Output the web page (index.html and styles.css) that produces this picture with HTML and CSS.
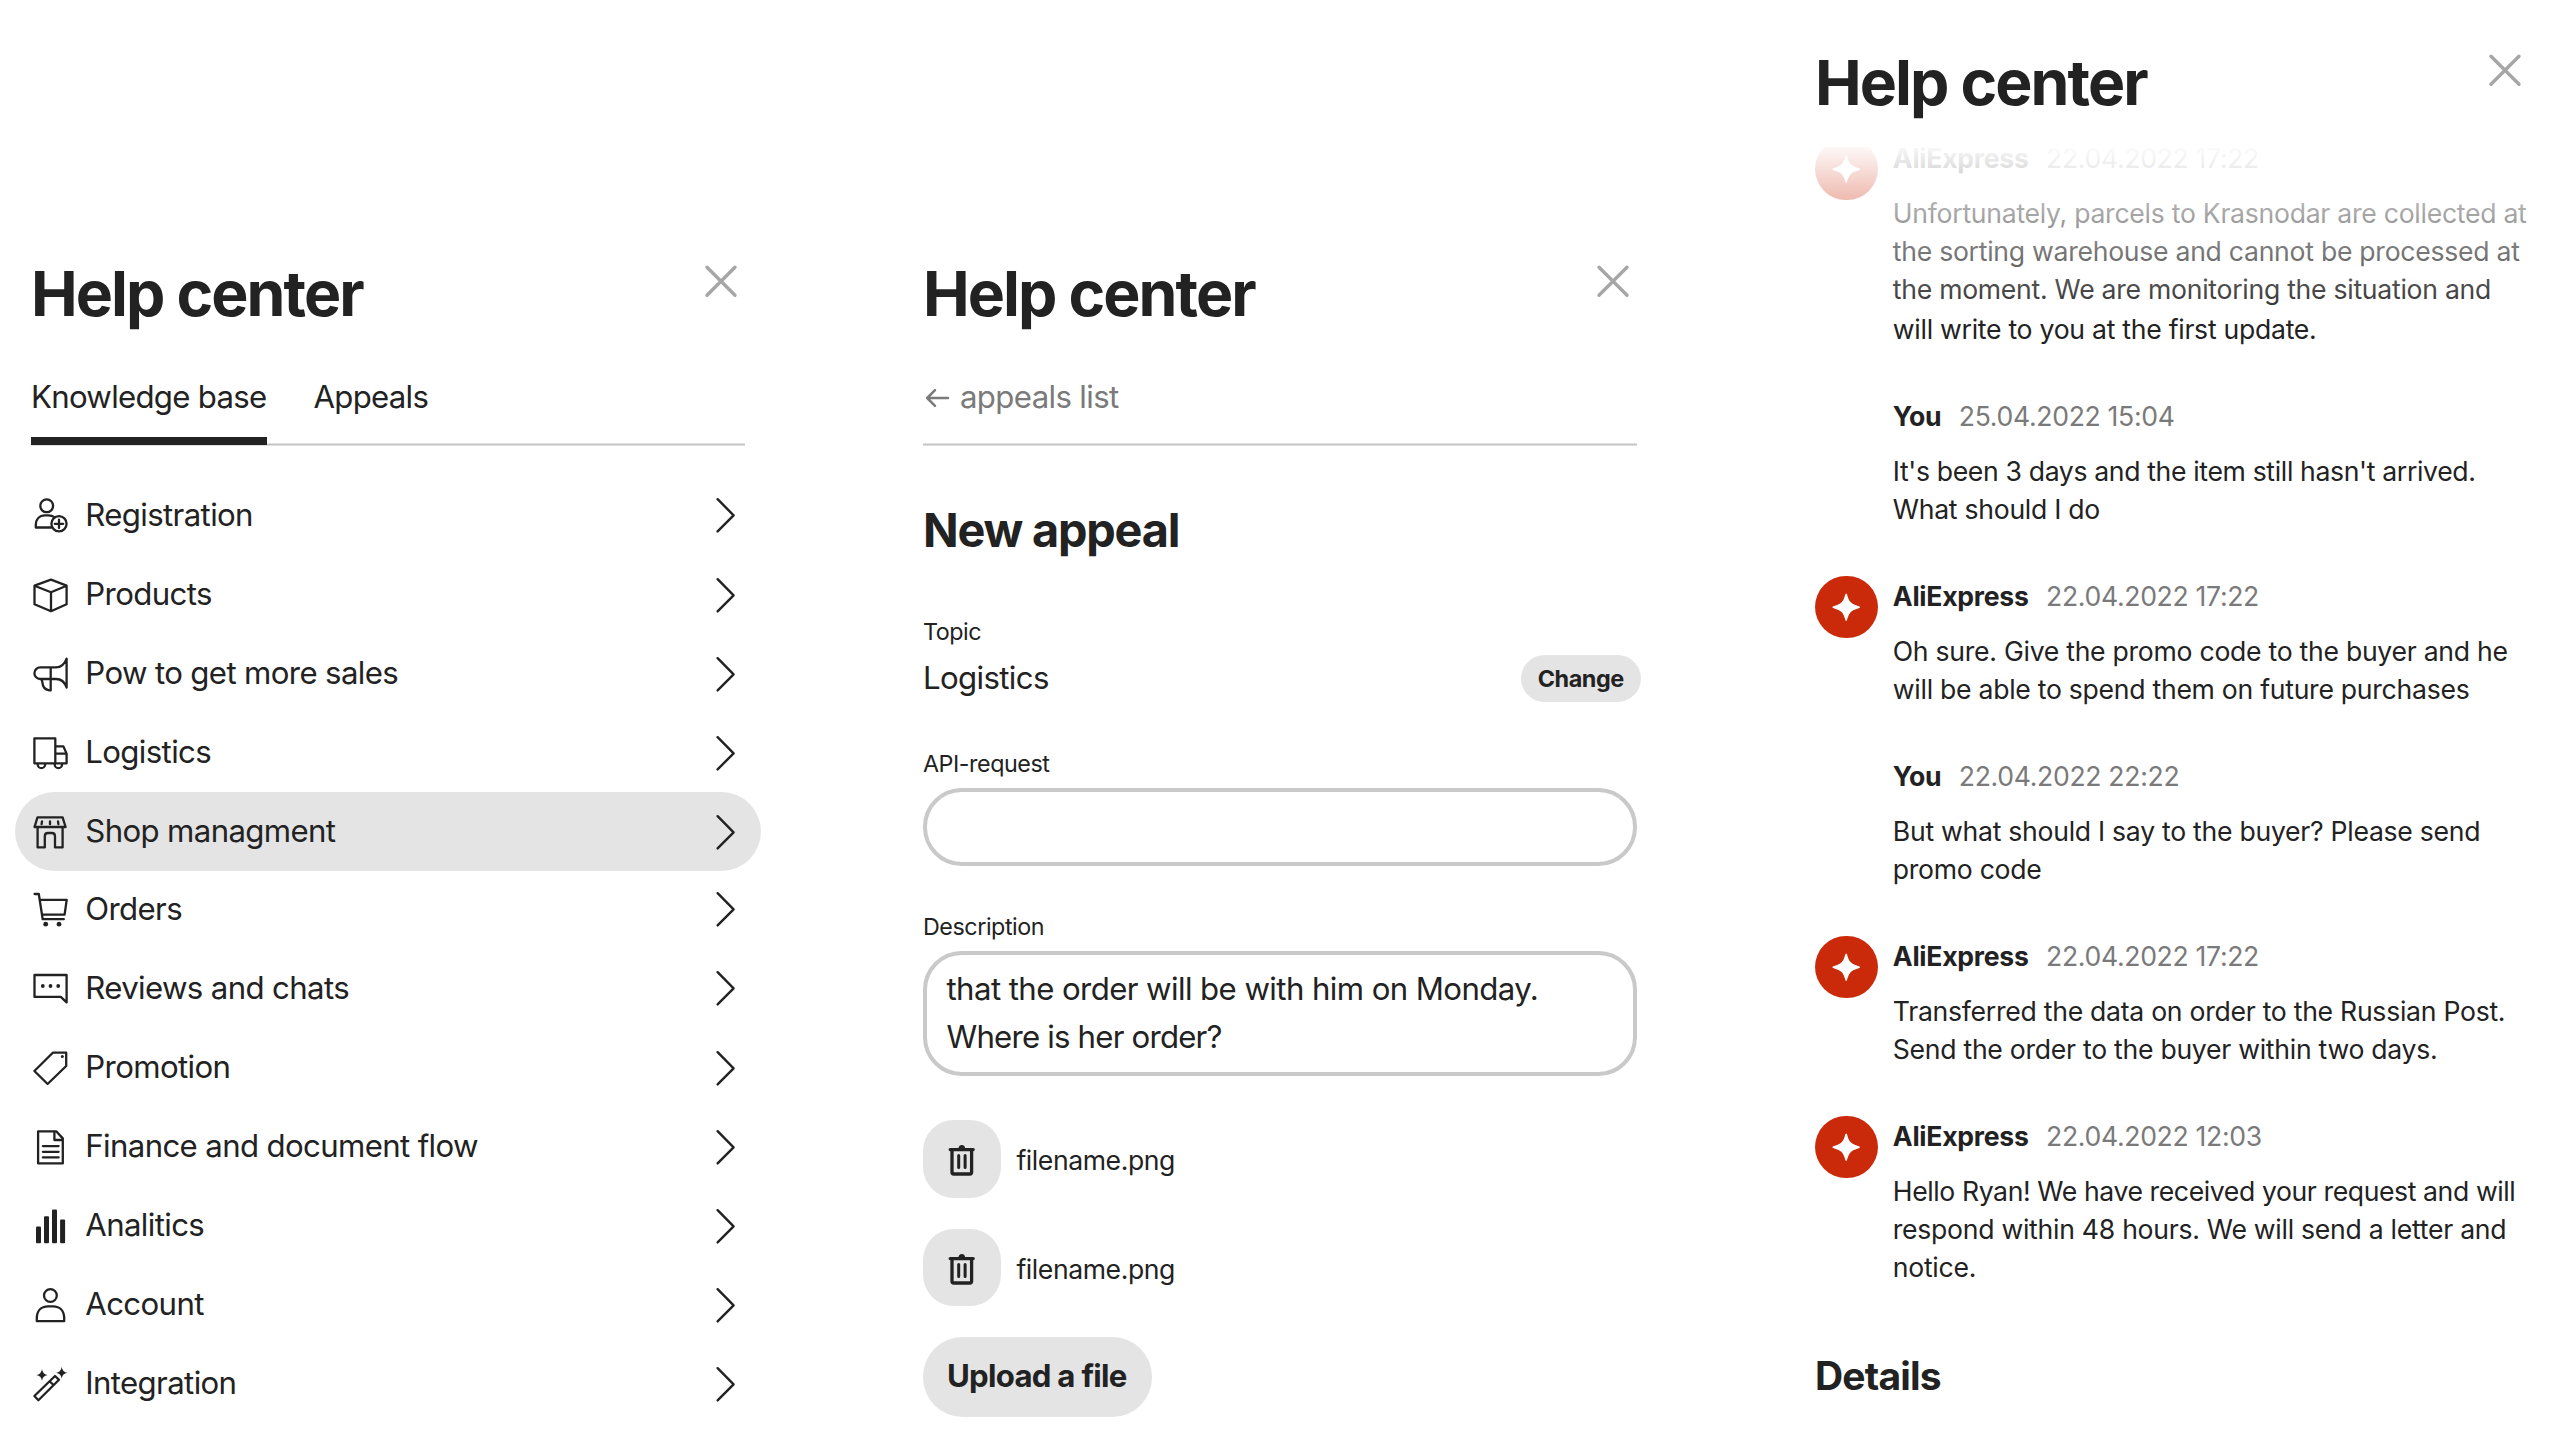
FILE: index.html
```html
<!DOCTYPE html>
<html lang="en">
<head>
<meta charset="utf-8">
<title>Help center</title>
<link rel="stylesheet" href="styles.css">
</head>
<body>
<svg class="sprite" aria-hidden="true">
  <symbol id="close" viewBox="0 0 40 40"><path d="M6 6.2 34 34.2M34 6.2 6 34.2" stroke-width="3.4"/></symbol>
  <symbol id="chevron" viewBox="0 0 40 40"><path d="M12.6 4.2 28.6 20.3 12.6 36.4" stroke-width="2.4"/></symbol>
  <symbol id="trash" viewBox="0 0 40 40">
    <path d="M8.2 10.6H31.2M10 10.6V33.2Q10 35 11.8 35H27.8Q29.6 35 29.6 33.2V10.6" stroke-width="3.3"/>
    <path d="M16.7 16.6V28.4M23.1 16.6V28.4" stroke-width="3"/>
    <path class="solid" d="M16.4 10C16.4 7.6 17.8 6 19.8 6S23.2 7.6 23.2 10Z"/>
  </symbol>
  <symbol id="spark" viewBox="-31.2 -31.2 62.4 62.4">
    <path class="solid" d="M0-13.8C1.3-13.8 1.2-8.6 4.6-4.9C8.2-1.4 13.8-1.4 13.8 0C13.8 1.4 8.2 1.4 4.6 4.9C1.2 8.6 1.3 13.8 0 13.8C-1.3 13.8-1.2 8.6-4.6 4.9C-8.2 1.4-13.8 1.4-13.8 0C-13.8-1.4-8.2-1.4-4.6-4.9C-1.2-8.6-1.3-13.8 0-13.8Z"/>
  </symbol>
</svg>
<main class="page">

  <section class="panel">
    <header class="head"><h1>Help center</h1><svg class="ico close"><use href="#close"/></svg></header>
    <nav class="tabs"><a class="tab active">Knowledge base</a><a class="tab">Appeals</a></nav>
    <ul class="menu">
      <li class="item"><svg class="ico" viewBox="0 0 40 40"><circle cx="15.7" cy="10.8" r="6.4"/><path d="M20.5 32.5H4.8V30.5C4.8 24.2 8.6 20.4 14 20.4H17.4C19.8 20.4 21.8 21 23.4 22.2"/><circle cx="28" cy="28.8" r="7.6"/><path d="M28 24.6V33M23.8 28.8H32.2"/></svg><span class="label">Registration</span><svg class="ico"><use href="#chevron"/></svg></li>
      <li class="item"><svg class="ico" viewBox="0 0 40 40"><path d="M20 4.6 35.6 10.6V29.2L20 36.2 3.5 29.2V10.6ZM3.5 10.8 20 17.2 35.6 10.8M20 17.2V36"/></svg><span class="label">Products</span><svg class="ico"><use href="#chevron"/></svg></li>
      <li class="item"><svg class="ico" viewBox="0 0 40 40"><path d="M35.6 4.6C33.4 10.6 30 13.4 25 13.4H9.2A5.8 5.8 0 0 0 9.2 25H25C30 25 33.6 27.8 35.6 33.6ZM19.7 13.4V36.4H18.2C14 35.6 11.6 32.6 11.4 28.4C11.3 26.6 10.8 25.6 9.8 25"/></svg><span class="label">Pow to get more sales</span><svg class="ico"><use href="#chevron"/></svg></li>
      <li class="item"><svg class="ico" viewBox="0 0 40 40"><path d="M3.4 5.4H24.3V30.3H3.4ZM24.3 13.4H32.4L35.6 20.6V30.3H24.3M24.3 20.6H35.6M6.7 30.3V31.4A3.7 3.7 0 0 0 14.1 31.4V30.3M23.7 30.3V31.4A3.7 3.7 0 0 0 31.1 31.4V30.3"/></svg><span class="label">Logistics</span><svg class="ico"><use href="#chevron"/></svg></li>
      <li class="item selected"><svg class="ico" viewBox="0 0 40 40"><path d="M6.5 5.3H31.6L34.6 15H3.5ZM6.6 15V35.4H13.8V24.2Q13.8 21 17 21H20.8Q24 21 24 24.2V35.4H31.6V15M11 9.4 10.6 12.2M19 9.4V12.2M27 9.4 27.4 12.2"/></svg><span class="label">Shop managment</span><svg class="ico"><use href="#chevron"/></svg></li>
      <li class="item"><svg class="ico" viewBox="0 0 40 40"><path d="M3.6 5H7.8L11.7 30.2H32.8M8.8 10.8H35.7L33.6 25.7H11"/><circle class="solid" cx="14.7" cy="35.2" r="2.4"/><circle class="solid" cx="28" cy="35.2" r="2.4"/></svg><span class="label">Orders</span><svg class="ico"><use href="#chevron"/></svg></li>
      <li class="item"><svg class="ico" viewBox="0 0 40 40"><path d="M3.5 7H35.6V34.4L29.8 28.9H3.5Z"/><circle class="solid" cx="11.8" cy="18" r="1.9"/><circle class="solid" cx="19.5" cy="18" r="1.9"/><circle class="solid" cx="27.2" cy="18" r="1.9"/></svg><span class="label">Reviews and chats</span><svg class="ico"><use href="#chevron"/></svg></li>
      <li class="item"><svg class="ico" viewBox="0 0 40 40"><path d="M21.8 4.7H35.2V18L16.6 36 3.4 23Z"/><circle class="solid" cx="31.3" cy="8.5" r="1.5"/></svg><span class="label">Promotion</span><svg class="ico"><use href="#chevron"/></svg></li>
      <li class="item"><svg class="ico" viewBox="0 0 40 40"><path d="M7.1 4.3H25.2L31.8 11.4V36.4H7.1ZM23.4 4.6V13H31.6M11.9 19.1H27.6M11.9 24.8H27.6M11.9 30.4H27.6"/></svg><span class="label">Finance and document flow</span><svg class="ico"><use href="#chevron"/></svg></li>
      <li class="item"><svg class="ico" viewBox="0 0 40 40"><rect class="solid" x="5" y="20.6" width="5" height="16.6" rx="1"/><rect class="solid" x="13" y="10.3" width="5" height="26.9" rx="1"/><rect class="solid" x="21" y="3.6" width="5" height="33.6" rx="1"/><rect class="solid" x="29.1" y="13.6" width="5" height="23.6" rx="1"/></svg><span class="label">Analitics</span><svg class="ico"><use href="#chevron"/></svg></li>
      <li class="item"><svg class="ico" viewBox="0 0 40 40"><circle cx="19.4" cy="10.5" r="6.4"/><path d="M5.8 36.2V33.6C5.8 26 10 21.3 17 21.3H22C29 21.3 33.2 26 33.2 33.6V36.2Z"/></svg><span class="label">Account</span><svg class="ico"><use href="#chevron"/></svg></li>
      <li class="item"><svg class="ico" viewBox="0 0 40 40"><path d="M3.4 32 24 12 28 15.8 7.4 36.2ZM18.6 17.2 22.5 21"/><path class="solid" d="M11 5.2Q11.8 10.2 16.6 11Q11.8 11.8 11 16.8Q10.2 11.8 5.4 11Q10.2 10.2 11 5.2ZM30.7 2.9Q31.5 7.9 36.3 8.7Q31.5 9.5 30.7 14.5Q29.9 9.5 25.1 8.7Q29.9 7.9 30.7 2.9Z"/></svg><span class="label">Integration</span><svg class="ico"><use href="#chevron"/></svg></li>
    </ul>
  </section>

  <section class="panel">
    <header class="head"><h1>Help center</h1><svg class="ico close"><use href="#close"/></svg></header>
    <a class="back"><svg class="arrow" viewBox="0 0 37 40"><path d="M4.4 20H25M12 12.2 4.2 20 12 27.8"/></svg>appeals list</a>
    <h2>New appeal</h2>
    <div class="caption">Topic</div>
    <div class="topic"><span>Logistics</span><button class="change">Change</button></div>
    <label class="caption api">API-request</label>
    <div class="field"></div>
    <label class="caption desc">Description</label>
    <div class="field area">that the order will be with him on Monday.<br><span class="snug">Where is her order?</span></div>
    <div class="files">
      <div class="file"><button class="remove"><svg class="ico"><use href="#trash"/></svg></button><span>filename.png</span></div>
      <div class="file"><button class="remove"><svg class="ico"><use href="#trash"/></svg></button><span>filename.png</span></div>
      <button class="upload">Upload a file</button>
    </div>
  </section>

  <section class="panel chat">
    <header class="head"><h1>Help center</h1><svg class="ico close"><use href="#close"/></svg></header>
    <div class="thread">
      <article class="msg"><svg class="avatar"><use href="#spark"/></svg><div class="who"><b>AliExpress</b><time>22.04.2022 17:22</time></div><div class="text">Unfortunately, parcels to Krasnodar are collected at<br>the sorting warehouse and cannot be processed at<br>the moment. We are monitoring the situation and<p>will write to you at the first update.</p></div></article>
      <article class="msg"><div class="who"><b>You</b><time>25.04.2022 15:04</time></div><div class="text"><span class="tight">It's been 3 days and the item still hasn't arrived.</span><br>What should I do</div></article>
      <article class="msg"><svg class="avatar"><use href="#spark"/></svg><div class="who"><b>AliExpress</b><time>22.04.2022 17:22</time></div><div class="text">Oh sure. Give the promo code to the buyer and he<br>will be able to spend them on future purchases</div></article>
      <article class="msg"><div class="who"><b>You</b><time>22.04.2022 22:22</time></div><div class="text">But what should I say to the buyer? Please send<br>promo code</div></article>
      <article class="msg"><svg class="avatar"><use href="#spark"/></svg><div class="who"><b>AliExpress</b><time>22.04.2022 17:22</time></div><div class="text">Transferred the data on order to the Russian Post.<br>Send the order to the buyer within two days.</div></article>
      <article class="msg last"><svg class="avatar"><use href="#spark"/></svg><div class="who"><b>AliExpress</b><time>22.04.2022 12:03</time></div><div class="text"><span class="tighter">Hello Ryan! We have received your request and will</span><br>respond within 48 hours. We will send a letter and<br>notice.</div></article>
      <h3>Details</h3>
    </div>
  </section>

</main>
</body>
</html>
```
FILE: styles.css
```css
* { box-sizing: border-box; }

body, h1, h2, h3, ul, p { margin: 0; padding: 0; }

body {
  height: 1440px;
  overflow: hidden;
  background: #fff;
  color: #222;
  font: 400 31.2px/38px Inter, "Liberation Sans", sans-serif;
  letter-spacing: -0.64px;
  white-space: nowrap;
}

.sprite { display: none; }

.page {
  display: grid;
  grid-template-columns: repeat(3, 714px);
  column-gap: 178px;
  height: 1440px;
  padding-left: 31px;
}

.panel {
  display: flex;
  flex-direction: column;
  padding-top: 255px;
  min-width: 0;
}

.panel.chat { padding-top: 44px; }

.head {
  display: flex;
  justify-content: space-between;
  height: 76px;
}

h1 {
  font-size: 62.5px;
  line-height: 76px;
  font-weight: 700;
  letter-spacing: -1.93px;
}

.ico {
  flex: none;
  width: 40px;
  height: 40px;
  fill: none;
  stroke: currentColor;
  stroke-width: 2.3;
  stroke-linecap: round;
  stroke-linejoin: round;
}

.solid { fill: currentColor; stroke: none; }

.close { margin: 5.5px 3.6px 0 0; color: #a6a6a6; }

/* Tabs */
.tabs {
  display: flex;
  gap: 46.5px;
  height: 70px;
  margin-top: 45px;
  background: linear-gradient(#e2e2e2 1px, #c6c6c6 1px 2px, #dedede 2px) bottom / 100% 3px no-repeat;
}

.tab { line-height: 42px; letter-spacing: -0.72px; }

.tab.active {
  height: 69px;
  width: 236px;
  border-bottom: 8px solid #222;
}

/* Menu */
.menu { list-style: none; margin: 29.9px -16px 0; }

.item {
  display: flex;
  align-items: center;
  height: 79.1px;
  padding: 0 16px;
}

.label { flex: 1; padding: 0 0 1px 14.3px; }

.item.selected {
  margin-bottom: -1.6px;
  border-radius: 39.5px;
  background: #e4e4e4;
}

/* New appeal form */
.back {
  display: flex;
  height: 70px;
  margin-top: 45px;
  color: #7a7a7a;
  line-height: 42px;
  background: linear-gradient(#e2e2e2 1px, #c6c6c6 1px 2px, #dedede 2px) bottom / 100% 3px no-repeat;
}

.arrow {
  width: 37px;
  height: 40px;
  margin-top: 2px;
  fill: none;
  stroke: currentColor;
  stroke-width: 2.5;
  stroke-linecap: round;
  stroke-linejoin: round;
}

h2 {
  margin-top: 56px;
  font-size: 46.8px;
  line-height: 56px;
  font-weight: 700;
  letter-spacing: -1.2px;
}

.caption {
  margin-top: 59px;
  font-size: 23.3px;
  line-height: 29px;
  letter-spacing: -0.45px;
}

.caption.api { margin-top: 47px; }
.caption.desc { margin-top: 46.5px; }

.topic {
  display: flex;
  align-items: center;
  justify-content: space-between;
  height: 47px;
  margin: 9px -3.6px 0 0;
}

.topic span { padding-bottom: 1px; }

button {
  border: 0;
  background: #e4e4e4;
  color: #222;
  font-family: inherit;
}

.change {
  width: 119.6px;
  height: 47px;
  padding: 0 0 1px;
  border-radius: 23.5px;
  font-size: 23.4px;
  line-height: 29px;
  font-weight: 700;
  letter-spacing: -0.42px;
}

.field {
  height: 77.5px;
  margin-top: 10px;
  border: 4px solid #c9c9c9;
  border-radius: 38.7px;
}

.field.area {
  height: 125px;
  margin-top: 9.5px;
  padding: 11.8px 19.5px 0;
  line-height: 47.4px;
  letter-spacing: -0.59px;
}

.snug { letter-spacing: -0.8px; }

.files {
  display: flex;
  flex-direction: column;
  gap: 31px;
  margin-top: 44.5px;
}

.file {
  display: flex;
  align-items: center;
  gap: 15.4px;
  font-size: 26.6px;
  line-height: 32px;
  letter-spacing: -0.42px;
}

.file span { padding-top: 2px; }

.remove {
  display: grid;
  place-items: center;
  width: 78px;
  height: 77.7px;
  padding: 0;
  border-radius: 31px;
}

.upload {
  width: 228.6px;
  height: 79.3px;
  padding: 0 1px 2px 0;
  border-radius: 39.6px;
  font-size: 31.2px;
  line-height: 38px;
  font-weight: 700;
  letter-spacing: -0.72px;
}

/* Conversation */
.thread {
  position: relative;
  flex: 1;
  margin-top: 17px;
  overflow: hidden;
  font-size: 26.6px;
  letter-spacing: -0.26px;
}

/* Older messages fade out beneath the header */
.thread::after {
  content: "";
  position: absolute;
  inset: 0 0 auto;
  height: 185px;
  background: linear-gradient(#fff 10px, rgba(255, 255, 255, 0.97) 10px, rgba(255, 255, 255, 0));
}

.msg {
  display: grid;
  grid-template-columns: 77.8px 1fr;
  row-gap: 20px;
  margin-bottom: 52px;
}

.msg:first-child { margin-top: 5px; }
.msg.last { margin-bottom: 0; }

.avatar {
  grid-area: 1 / 1;
  width: 62.4px;
  height: 62.4px;
  margin: -4.4px 0 -26px 0.2px;
  border-radius: 50%;
  background: #cb2a0a;
  color: #fff;
}

.who {
  grid-area: 1 / 2;
  display: flex;
  gap: 17.4px;
  height: 32px;
  line-height: 32px;
}

.who b { font-weight: 700; }
.who time { color: #7a7a7a; letter-spacing: -0.32px; }

.text { grid-area: 2 / 2; line-height: 38px; letter-spacing: -0.27px; }
.text p { margin-top: 2px; }
.tight { letter-spacing: -0.35px; }
.tighter { letter-spacing: -0.4px; }

h3 {
  margin-top: 66px;
  font-size: 39px;
  line-height: 47px;
  font-weight: 700;
  letter-spacing: -0.8px;
}
```
